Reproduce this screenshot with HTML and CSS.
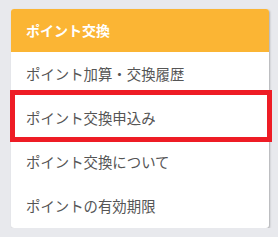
FILE: index.html
```html
<!DOCTYPE html>
<html lang="ja">

<head>
    <meta charset="UTF-8">
    <meta name="viewport" content="width=device-width, initial-scale=1.0">
    <title>ポイント交換</title>
    <link rel="stylesheet" href="styles.css">
</head>

<body>
    <nav class="menu-card">
        <h2 class="menu-title">ポイント交換</h2>
        <a href="#" class="menu-item">ポイント加算・交換履歴</a>
        <a href="#" class="menu-item current">ポイント交換申込み</a>
        <a href="#" class="menu-item">ポイント交換について</a>
        <a href="#" class="menu-item">ポイントの有効期限</a>
    </nav>
</body>

</html>
```

FILE: styles.css
```css
* {
    margin: 0;
    padding: 0;
    box-sizing: border-box;
    font-family: 'Noto Sans CJK JP', 'Noto Sans', sans-serif;
}

body {
    background: #e8e9ed;
    padding: 9px 9px 0 11px;
}

.menu-card {
    width: 258px;
    background: #fff;
    border-radius: 3px;
    box-shadow: 1px 1px 2px rgba(0, 0, 0, 0.25);
    display: flex;
    flex-direction: column;
}

.menu-title {
    background: #fbb534;
    color: #fff;
    font-size: 14px;
    font-weight: bold;
    height: 43px;
    line-height: 43px;
    padding-left: 15px;
    border-radius: 3px 3px 0 0;
}

.menu-item {
    position: relative;
    display: block;
    height: 44px;
    line-height: 44px;
    padding-left: 15px;
    color: #555;
    font-size: 14.4px;
    text-decoration: none;
}

/* highlight frame around the selected row */
.menu-item.current::after {
    content: "";
    position: absolute;
    left: -1px;
    right: -3px;
    top: -6px;
    bottom: -2px;
    border: 5px solid #ee1c25;
}
```
